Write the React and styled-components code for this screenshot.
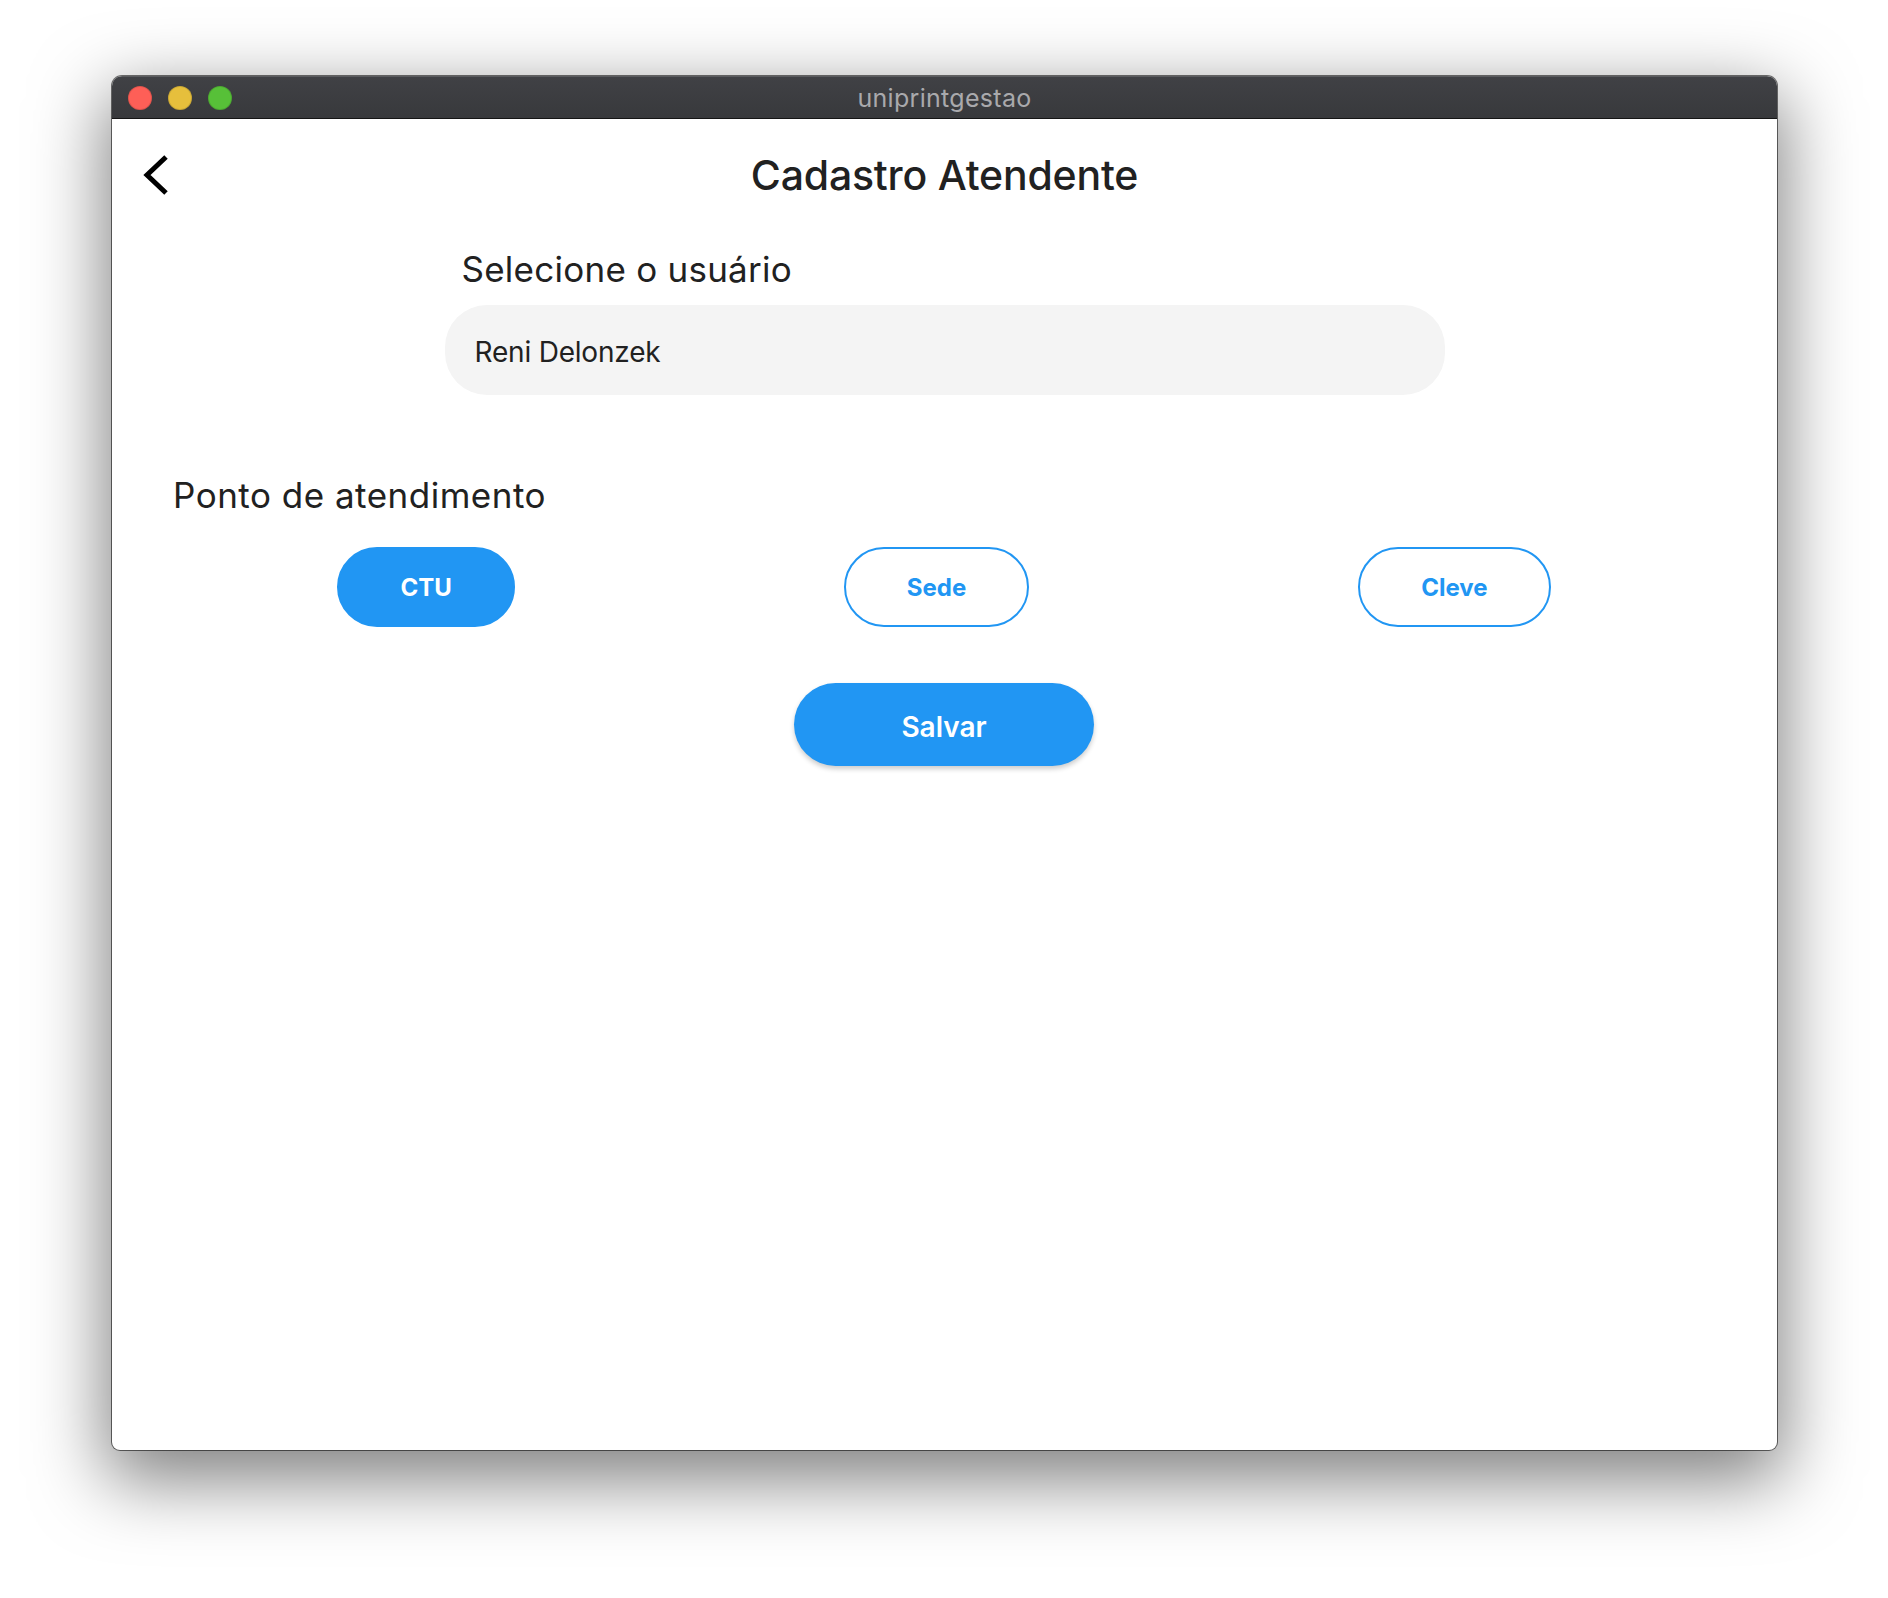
import React, { useState } from "react";
import styled, { createGlobalStyle } from "styled-components";

const GlobalStyle = createGlobalStyle`
  html, body {
    margin: 0;
    padding: 0;
    background: #ffffff;
  }
  body {
    font-family: Inter, "Noto Sans", "Liberation Sans", sans-serif;
    -webkit-font-smoothing: antialiased;
  }
`;

const Desktop = styled.div`
  width: 1888px;
  height: 1598px;
  padding: 76px 0 0 112px;
  box-sizing: border-box;
  overflow: hidden;
`;

const Window = styled.div`
  width: 1665px;
  height: 1374px;
  display: flex;
  flex-direction: column;
  border-radius: 10px 10px 8px 8px;
  background: #ffffff;
  overflow: hidden;
  box-shadow: 0 0 0 1px rgba(0, 0, 0, 0.55), 0 24px 72px 6px rgba(0, 0, 0, 0.5);
`;

const TitleBar = styled.div`
  flex: none;
  display: grid;
  grid-template-columns: 1fr auto 1fr;
  align-items: center;
  background: linear-gradient(#404145, #38393c);
  border-top: 1px solid #5b5c5f;
  border-bottom: 1px solid #151515;
  box-sizing: border-box;
  height: 43px;
`;

const Lights = styled.div`
  display: flex;
  gap: 16px;
  padding-left: 16px;
`;

const Light = styled.span`
  width: 24px;
  height: 24px;
  border-radius: 50%;
  background: ${(p) => p.$color};
  box-shadow: inset 0 0 0 1px rgba(0, 0, 0, 0.12);
`;

const WindowTitle = styled.div`
  font-size: 25px;
  color: #a9a9ac;
  letter-spacing: 0.3px;
`;

const Body = styled.div`
  flex: 1;
  display: flex;
  flex-direction: column;
  padding: 32px 0 0;
`;

const Header = styled.div`
  display: grid;
  grid-template-columns: 1fr auto 1fr;
  align-items: center;
  height: 48px;
`;

const BackButton = styled.button`
  justify-self: start;
  margin-left: 30px;
  width: 30px;
  height: 44px;
  padding: 0;
  border: none;
  background: transparent;
  display: flex;
  align-items: center;
  justify-content: center;
  cursor: pointer;
`;

const PageTitle = styled.h1`
  margin: 0;
  font-size: 41px;
  line-height: 48px;
  font-weight: 500;
  color: #212121;
  letter-spacing: -0.2px;
`;

const UserBlock = styled.div`
  width: 1000px;
  margin: 50px auto 0;
  display: flex;
  flex-direction: column;
`;

const Label = styled.div`
  font-size: 35px;
  line-height: 40px;
  color: #212121;
  letter-spacing: ${(p) => p.$spacing || 0.25}px;
  padding-left: ${(p) => p.$inset || 0}px;
`;

const UserField = styled.div`
  margin-top: 16px;
  height: 90px;
  border-radius: 42px;
  background: #f4f4f4;
  display: flex;
  align-items: center;
  padding: 4px 30px 0;
  box-sizing: border-box;
  font-size: 28px;
  color: #212121;
  letter-spacing: -0.2px;
`;

const PointSection = styled.div`
  margin-top: 80px;
  padding: 0 62px 0 61px;
  display: flex;
  flex-direction: column;
`;

const PointRow = styled.div`
  margin-top: 32px;
  display: flex;
  justify-content: space-around;
`;

const PointButton = styled.button`
  height: 80px;
  padding: 0 61px;
  border-radius: 40px;
  box-sizing: border-box;
  border: 2px solid #2196f3;
  background: ${(p) => (p.$active ? "#2196f3" : "#ffffff")};
  color: ${(p) => (p.$active ? "#ffffff" : "#2196f3")};
  font-family: inherit;
  font-size: 24px;
  font-weight: 700;
  cursor: pointer;
`;

const SaveButton = styled.button`
  align-self: center;
  margin-top: 56px;
  width: 300px;
  height: 83px;
  padding: 5px 0 0;
  border: none;
  border-radius: 42px;
  background: #2196f3;
  color: #ffffff;
  font-family: inherit;
  font-size: 28px;
  font-weight: 600;
  box-shadow: 0 3px 5px rgba(0, 0, 0, 0.2);
  cursor: pointer;
`;

const BackIcon = () => (
  <svg width="30" height="44" viewBox="0 0 30 44">
    <path d="M24 4 L5 22 L24 40" fill="none" stroke="#000" strokeWidth="5" strokeLinejoin="miter" />
  </svg>
);

const points = ["CTU", "Sede", "Cleve"];

export default function App() {
  const [point, setPoint] = useState("CTU");

  return (
    <>
      <GlobalStyle />
      <Desktop>
        <Window>
          <TitleBar>
            <Lights>
              <Light $color="#fe5f57" />
              <Light $color="#e6bf3c" />
              <Light $color="#57c038" />
            </Lights>
            <WindowTitle>uniprintgestao</WindowTitle>
            <div />
          </TitleBar>
          <Body>
            <Header>
              <BackButton aria-label="Voltar">
                <BackIcon />
              </BackButton>
              <PageTitle>Cadastro Atendente</PageTitle>
              <div />
            </Header>

            <UserBlock>
              <Label $inset={17}>Selecione o usuário</Label>
              <UserField>Reni Delonzek</UserField>
            </UserBlock>

            <PointSection>
              <Label $spacing={0.5}>Ponto de atendimento</Label>
              <PointRow>
                {points.map((p) => (
                  <PointButton key={p} $active={point === p} onClick={() => setPoint(p)}>
                    {p}
                  </PointButton>
                ))}
              </PointRow>
              <SaveButton>Salvar</SaveButton>
            </PointSection>
          </Body>
        </Window>
      </Desktop>
    </>
  );
}
